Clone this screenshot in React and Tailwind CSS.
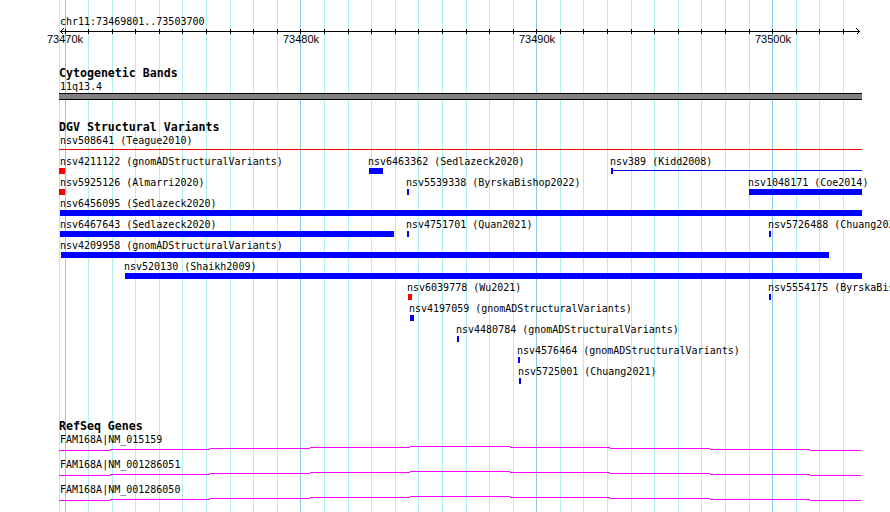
import React from "react";

const gridLines = Array.from({ length: 34 }, (_, k) => ({
  x: Math.floor(65 + k * 23.59),
  major: k % 10 === 0,
}));

const rulerLabels = [
  { t: "73470k", x: 65 },
  { t: "73480k", x: 301 },
  { t: "73490k", x: 537 },
  { t: "73500k", x: 773 },
];

const dgvRows = [
  [{ t: "nsv508641 (Teague2010)", lx: 60, line: [59, 862], c: "red" }],
  [
    { t: "nsv4211122 (gnomADStructuralVariants)", lx: 60, bar: [59, 65], c: "red" },
    { t: "nsv6463362 (Sedlazeck2020)", lx: 368, bar: [369, 383] },
    { t: "nsv389 (Kidd2008)", lx: 610, line: [611, 862], tick: 611 },
  ],
  [
    { t: "nsv5925126 (Almarri2020)", lx: 60, bar: [59, 65], c: "red" },
    { t: "nsv5539338 (ByrskaBishop2022)", lx: 406, bar: [407, 409] },
    { t: "nsv1048171 (Coe2014)", lx: 748, bar: [749, 862] },
  ],
  [{ t: "nsv6456095 (Sedlazeck2020)", lx: 60, bar: [60, 862] }],
  [
    { t: "nsv6467643 (Sedlazeck2020)", lx: 60, bar: [60, 394] },
    { t: "nsv4751701 (Quan2021)", lx: 406, bar: [407, 409] },
    { t: "nsv5726488 (Chuang2021)", lx: 768, bar: [769, 771] },
  ],
  [{ t: "nsv4209958 (gnomADStructuralVariants)", lx: 60, bar: [61, 829] }],
  [{ t: "nsv520130 (Shaikh2009)", lx: 124, bar: [125, 862] }],
  [
    { t: "nsv6039778 (Wu2021)", lx: 407, bar: [408, 412], c: "red" },
    { t: "nsv5554175 (ByrskaBishop2022)", lx: 768, bar: [769, 771] },
  ],
  [{ t: "nsv4197059 (gnomADStructuralVariants)", lx: 409, bar: [410, 414] }],
  [{ t: "nsv4480784 (gnomADStructuralVariants)", lx: 456, bar: [457, 459] }],
  [{ t: "nsv4576464 (gnomADStructuralVariants)", lx: 517, bar: [518, 520] }],
  [{ t: "nsv5725001 (Chuang2021)", lx: 518, bar: [519, 521] }],
];

const genes = ["FAM168A|NM_015159", "FAM168A|NM_001286051", "FAM168A|NM_001286050"];

const archSegs = [
  [59, 110, 4],
  [110, 210, 3],
  [210, 310, 2],
  [310, 410, 1],
  [410, 510, 0],
  [510, 610, 1],
  [610, 710, 2],
  [710, 810, 3],
  [810, 861, 4],
];

const mono = "font-['DejaVu_Sans_Mono',monospace]";

function TrackTitle({ children }) {
  return (
    <div className={`h-[13px] pl-[59px] text-[11.6px] font-bold leading-[13px] text-black ${mono}`}>
      {children}
    </div>
  );
}

function FeatureRow({ items }) {
  return (
    <div className="relative h-[21px]">
      {items.map((f, i) => (
        <React.Fragment key={i}>
          <div
            className={`absolute top-0 whitespace-nowrap text-[10px] leading-[13px] text-black ${mono}`}
            style={{ left: f.lx }}
          >
            {f.t}
          </div>
          {f.bar && (
            <div
              className={`absolute top-[13px] h-[6px] ${f.c === "red" ? "bg-[#ff0000]" : "bg-[#0000ff]"}`}
              style={{ left: f.bar[0], width: f.bar[1] - f.bar[0] }}
            />
          )}
          {f.line && (
            <div
              className={`absolute top-[15px] h-px ${f.c === "red" ? "bg-[#ff0000]" : "bg-[#0000ff]"}`}
              style={{ left: f.line[0], width: f.line[1] - f.line[0] }}
            />
          )}
          {f.tick && (
            <div className="absolute top-[13px] h-[6px] w-[2px] bg-[#0000ff]" style={{ left: f.tick }} />
          )}
        </React.Fragment>
      ))}
    </div>
  );
}

function GeneRow({ name }) {
  return (
    <div className="relative h-[25px]">
      <div className={`h-[13px] pl-[60px] text-[10px] leading-[13px] text-black ${mono}`}>{name}</div>
      <svg className="absolute left-0 top-[13px]" width="890" height="6" shapeRendering="crispEdges">
        {archSegs.map(([a, b, y], i) => (
          <rect key={i} x={a} y={y} width={b - a} height="1" fill="#ff00ff" />
        ))}
      </svg>
    </div>
  );
}

export default function App() {
  return (
    <div className="relative h-[512px] w-[890px] overflow-hidden bg-white">
      {/* grid */}
      <div className="absolute inset-0">
        <div className="absolute bottom-0 left-[59px] top-0 w-px bg-[#b0eef0]" />
        {gridLines.map((l, i) => (
          <div
            key={i}
            className={`absolute bottom-0 top-0 w-px ${l.major ? "bg-[#8cc8ea]" : "bg-[#b0eef0]"}`}
            style={{ left: l.x }}
          />
        ))}
      </div>

      <div className="relative flex flex-col">
        {/* ruler */}
        <div className={`h-[13px] mt-[15px] pl-[60px] text-[10px] leading-[13px] text-black ${mono}`}>
          chr11:73469801..73503700
        </div>
        <div className="relative h-[39px]">
          <svg className="absolute left-0 top-0" width="890" height="10" shapeRendering="crispEdges">
            <rect x="60" y="3" width="800" height="1" fill="#000" />
            {gridLines.map((l, i) => (
              <rect key={i} x={l.x} y="1" width="1" height="5" fill="#000" />
            ))}
            <polyline points="63.5,0.5 60.5,3.5 63.5,6.5" fill="none" stroke="#000" strokeWidth="1" />
            <polyline points="856.5,0.5 859.5,3.5 856.5,6.5" fill="none" stroke="#000" strokeWidth="1" />
          </svg>
          {rulerLabels.map((r) => (
            <div
              key={r.t}
              className="absolute top-[5px] -translate-x-1/2 whitespace-nowrap font-['Liberation_Sans',Arial,sans-serif] text-[11px] leading-[13px] text-black"
              style={{ left: r.x }}
            >
              {r.t}
            </div>
          ))}
        </div>

        {/* cytogenetic bands */}
        <TrackTitle>Cytogenetic Bands</TrackTitle>
        <div className={`h-[13px] pl-[60px] text-[10px] leading-[13px] text-black ${mono}`}>11q13.4</div>
        <div className="ml-[59px] h-[7px] w-[803px] border-y border-black bg-[#808080]" />

        {/* DGV */}
        <div className="mt-[21px]">
          <TrackTitle>DGV Structural Variants</TrackTitle>
        </div>
        {dgvRows.map((row, i) => (
          <FeatureRow key={i} items={row} />
        ))}

        {/* RefSeq */}
        <div className="mt-[34px]">
          <TrackTitle>RefSeq Genes</TrackTitle>
        </div>
        {genes.map((g) => (
          <GeneRow key={g} name={g} />
        ))}
      </div>
    </div>
  );
}
